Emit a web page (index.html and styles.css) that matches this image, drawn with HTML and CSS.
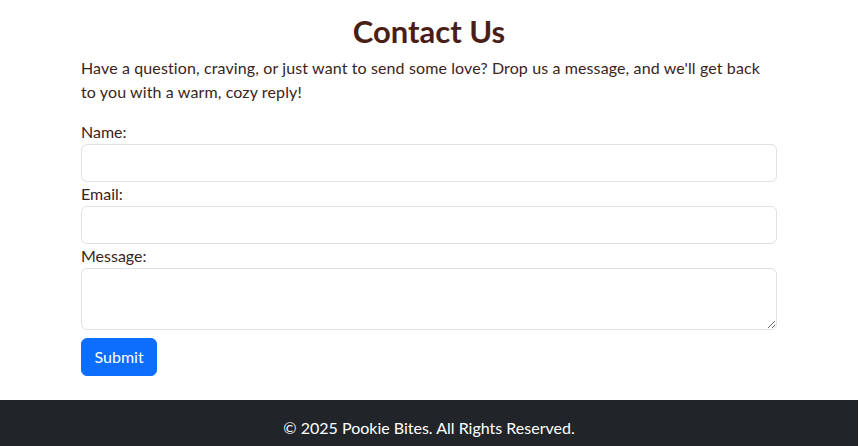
FILE: index.html
```html
<!DOCTYPE html>
<html lang="en">
<head>
<meta charset="utf-8">
<title>Contact Us - Pookie Bites</title>
<link rel="stylesheet" href="styles.css">
</head>
<body>
<main class="container">
  <h1 class="title">Contact Us</h1>
  <p class="intro">Have a question, craving, or just want to send some love? Drop us a message, and we'll get back to you with a warm, cozy reply!</p>
  <form class="contact-form">
    <label class="field-label" for="name">Name:</label>
    <input class="field" type="text" id="name">
    <label class="field-label" for="email">Email:</label>
    <input class="field" type="email" id="email">
    <label class="field-label" for="message">Message:</label>
    <textarea class="field field-area" id="message" rows="2"></textarea>
    <button class="btn-submit" type="button">Submit</button>
  </form>
</main>
<footer class="footer">© 2025 Pookie Bites. All Rights Reserved.</footer>
</body>
</html>
```

FILE: styles.css
```css
* { box-sizing: border-box; }
html { margin: 0; }
body {
  margin: 0 1px 0 0;
  font-family: Lato, "Noto Sans", sans-serif;
  font-size: 16px;
  line-height: 24px;
  color: #3b2420;
  background: #fff;
}
.container {
  width: 720px;
  margin: 0 auto;
  padding: 12px 12px 0;
}
.title {
  margin: 0 0 6px;
  text-align: center;
  font-size: 31px;
  line-height: 38px;
  font-weight: 700;
  color: #4a1e16;
}
.intro {
  margin: 0 0 16px;
  letter-spacing: 0.12px;
}
.contact-form {
  display: flex;
  flex-direction: column;
  align-items: flex-start;
}
.field-label {
  display: block;
}
.field {
  display: block;
  width: 100%;
  height: 38px;
  padding: 6px 12px;
  font: inherit;
  color: #212529;
  background: #fff;
  border: 1px solid #dee2e6;
  border-radius: 6px;
  margin: 0;
}
.field-area {
  height: 62px;
  resize: vertical;
}
.btn-submit {
  margin-top: 8px;
  height: 38px;
  padding: 6px 12.5px;
  font: inherit;
  color: #fff;
  background: #0d6efd;
  border: 1px solid #0d6efd;
  border-radius: 6px;
}
.footer {
  margin-top: 24px;
  padding: 16px 0;
  background: #212529;
  color: #fff;
  text-align: center;
}
```
